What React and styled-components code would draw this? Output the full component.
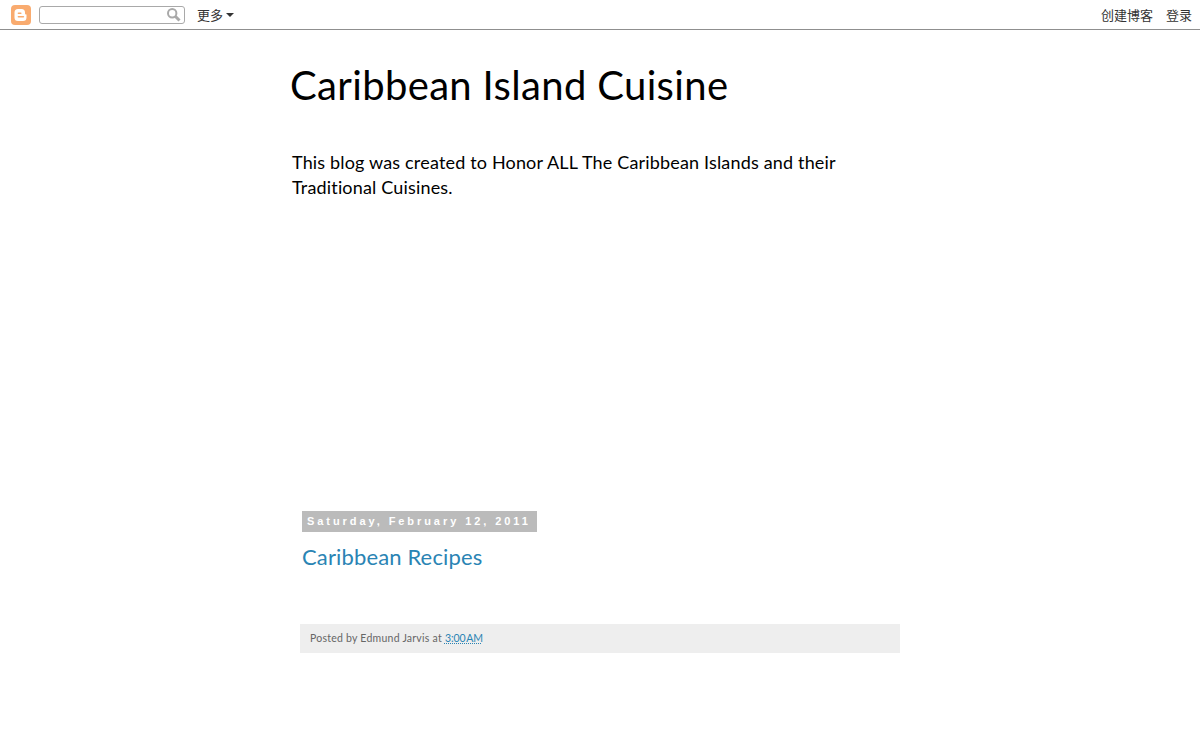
import styled, { createGlobalStyle } from "styled-components";

const GlobalStyle = createGlobalStyle`
  html, body {
    margin: 0;
    padding: 0;
    background: #fff;
    overflow: hidden;
  }
  body {
    font-family: Lato, "Noto Sans", "Liberation Sans", sans-serif;
    font-variant-ligatures: none;
  }
`;

const Navbar = styled.div`
  height: 29px;
  border-bottom: 1px solid #8f8f8f;
  display: flex;
  align-items: center;
  padding: 0 8px 0 11px;
  font-family: "Noto Sans CJK SC", sans-serif;
  font-size: 13px;
  line-height: 17px;
  color: #333;
`;

const LogoBox = styled.svg`
  width: 20px;
  height: 20px;
  margin-right: 8px;
`;

const SearchBox = styled.div`
  width: 141px;
  height: 16px;
  border: 1px solid #a9a9a9;
  border-radius: 3px;
  display: flex;
  align-items: center;
  justify-content: flex-end;
  padding-right: 3px;
  margin-right: 12px;
`;

const MoreLabel = styled.span`
  display: flex;
  align-items: center;
  gap: 3px;
  margin-top: -1px;
`;

const Caret = styled.i`
  width: 0;
  height: 0;
  margin-top: 1px;
  border-left: 4px solid transparent;
  border-right: 4px solid transparent;
  border-top: 4px solid #333;
`;

const NavRight = styled.div`
  margin-left: auto;
  margin-top: -1px;
  display: flex;
  gap: 13px;
`;

const Page = styled.div`
  width: 600px;
  margin: 0 auto;
`;

const BlogTitle = styled.h1`
  margin: 0 0 0 -10px;
  padding-top: 30px;
  font-size: 40px;
  line-height: 50px;
  font-weight: 400;
  letter-spacing: 0.35px;
  color: #000;
  white-space: nowrap;
`;

const Description = styled.p`
  margin: 0 0 0 -8px;
  padding-top: 40px;
  width: 570px;
  font-size: 18px;
  line-height: 25px;
  letter-spacing: 0.17px;
  color: #000;
`;

const Post = styled.div`
  padding-top: 309px;
`;

const DateHeader = styled.h2`
  display: inline-block;
  margin: 0 0 0 2px;
  height: 21px;
  padding: 0 6px 0 5px;
  background: #bbb;
  color: #fff;
  font-family: "Liberation Sans", Arial, sans-serif;
  font-size: 11px;
  font-weight: 700;
  line-height: 21px;
  letter-spacing: 2.93px;
  white-space: nowrap;
`;

const PostTitle = styled.h3`
  margin: 10px 0 0 2px;
  font-size: 22px;
  line-height: 30px;
  font-weight: 400;
  letter-spacing: 0.14px;
  color: #2a84b4;
`;

const PostFooter = styled.div`
  margin-top: 52px;
  height: 27px;
  padding: 0 0 2px 10px;
  display: flex;
  align-items: center;
  gap: 3px;
  background: #eee;
  color: #666;
  font-size: 10.5px;
  letter-spacing: 0.24px;
`;

const Timestamp = styled.a`
  color: #2a84b4;
  letter-spacing: -0.1px;
  word-spacing: -1.5px;
  text-decoration: underline dotted;
`;

export default function App() {
  return (
    <>
      <GlobalStyle />
      <Navbar>
        <LogoBox viewBox="0 0 20 20">
          <rect width="20" height="20" rx="4" fill="#f9ab6f" />
          <path
            d="M7 4h3.5a3.5 3.5 0 0 1 3.5 3.5v1a1 1 0 0 0 1 1h.5v3a3.5 3.5 0 0 1-3.5 3.5H7a3.5 3.5 0 0 1-3.5-3.5V7.5A3.5 3.5 0 0 1 7 4z"
            fill="#fff"
          />
          <rect x="6.6" y="7.4" width="4" height="1.6" rx=".8" fill="#f9ab6f" />
          <rect x="6.6" y="11" width="6.6" height="1.6" rx=".8" fill="#f9ab6f" />
        </LogoBox>
        <SearchBox>
          <svg width="15" height="15" viewBox="0 0 15 15" fill="none" stroke="#a9a9a9">
            <circle cx="6.2" cy="6.2" r="4.2" strokeWidth="2" />
            <path d="M9.5 9.5l4 4" strokeWidth="3" />
          </svg>
        </SearchBox>
        <MoreLabel>
          更多 <Caret />
        </MoreLabel>
        <NavRight>
          <span>创建博客</span>
          <span>登录</span>
        </NavRight>
      </Navbar>
      <Page>
        <BlogTitle>Caribbean Island Cuisine</BlogTitle>
        <Description>
          This blog was created to Honor ALL The Caribbean Islands and their Traditional Cuisines.
        </Description>
        <Post>
          <DateHeader>Saturday, February 12, 2011</DateHeader>
          <PostTitle>Caribbean Recipes</PostTitle>
          <PostFooter>
            Posted by Edmund Jarvis at <Timestamp>3:00 AM</Timestamp>
          </PostFooter>
        </Post>
      </Page>
    </>
  );
}
